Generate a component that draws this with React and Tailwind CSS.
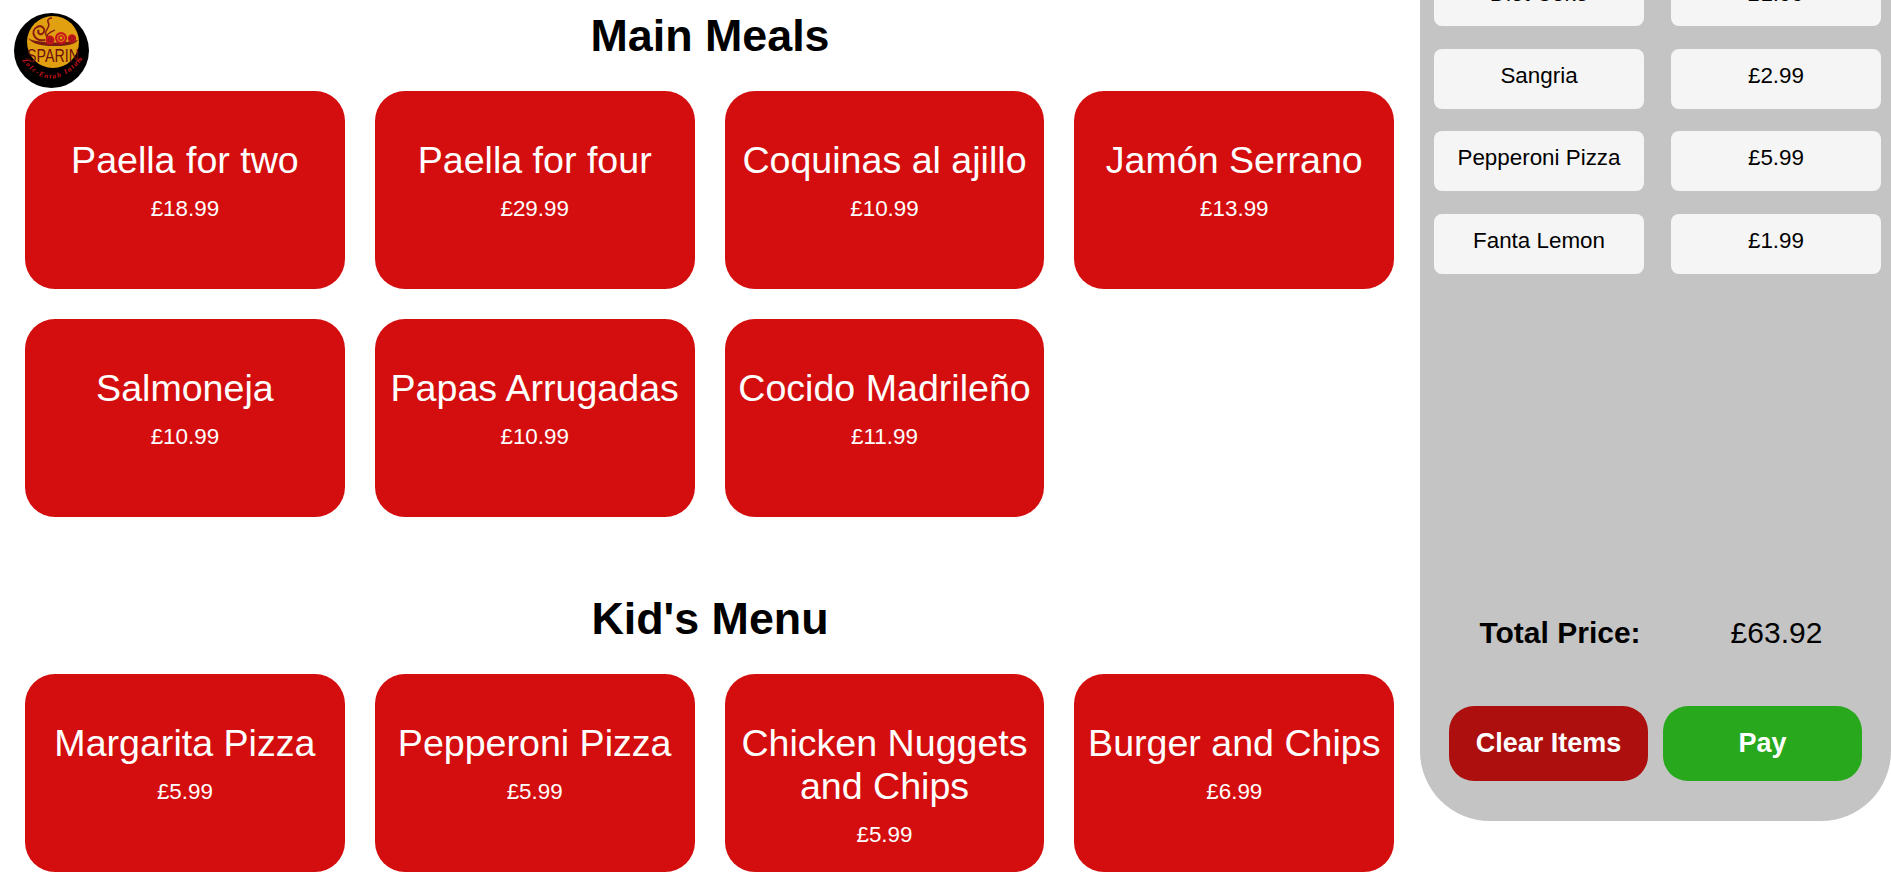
import React from 'react';

const mainMeals = [
    ['Paella for two', '£18.99'],
    ['Paella for four', '£29.99'],
    ['Coquinas al ajillo', '£10.99'],
    ['Jamón Serrano', '£13.99'],
    ['Salmoneja', '£10.99'],
    ['Papas Arrugadas', '£10.99'],
    ['Cocido Madrileño', '£11.99'],
];

const kidsMenu = [
    ['Margarita Pizza', '£5.99'],
    ['Pepperoni Pizza', '£5.99'],
    ['Chicken Nuggets and Chips', '£5.99'],
    ['Burger and Chips', '£6.99'],
];

const orderItems = [
    ['Sangria', '£2.99'],
    ['Pepperoni Pizza', '£5.99'],
    ['Fanta Lemon', '£1.99'],
];

const Logo = () => (
    <svg viewBox="0 0 75 75" className="absolute left-[14px] top-[13px] w-[75px] h-[75px]">
        <defs>
            <path id="logo-curve" d="M6 45 Q37 87 71 43" />
        </defs>
        <circle cx="37.5" cy="37.5" r="37.5" fill="#000" />
        <circle cx="39" cy="29" r="26" fill="#e0a010" />
        {/* swirl and steam */}
        <path d="M31 27 C20 29 16 18 23 14 C29 11 33 18 28 21 C25 22 23 19 25 17" fill="none" stroke="#8a1c12" strokeWidth="2" />
        <path d="M33 24 C28 17 38 15 34 9 C33 7 35 5 38 5" fill="none" stroke="#8a1c12" strokeWidth="1.6" />
        <path d="M33 27 C31 21 37 19 41 17" fill="none" stroke="#8a1c12" strokeWidth="1.2" />
        {/* bowl */}
        <path d="M14 25 C20 30 50 31 64 27 C60 33 48 33 38 33 C28 33 18 31 14 25 Z" fill="#7a1a10" />
        {/* snails */}
        <circle cx="36" cy="27" r="4.5" fill="#c8141c" />
        <circle cx="36" cy="27" r="2" fill="none" stroke="#7a1a10" strokeWidth="0.8" />
        <circle cx="47" cy="25" r="6" fill="#c8141c" />
        <circle cx="47" cy="25" r="3.5" fill="none" stroke="#e0a010" strokeWidth="0.9" />
        <circle cx="47" cy="25" r="1.4" fill="#e0a010" />
        <circle cx="58" cy="25.5" r="4.2" fill="#c8141c" />
        <circle cx="58" cy="25.5" r="2" fill="none" stroke="#7a1a10" strokeWidth="0.8" />
        <text x="39" y="49" textAnchor="middle" fontFamily="'Liberation Sans', sans-serif" fontSize="18" textLength="52" lengthAdjust="spacingAndGlyphs" fill="#6e0f0f">SPARIN</text>
        <text fontFamily="'Liberation Serif', serif" fontSize="7" fontWeight="700" fontStyle="italic" fill="#d4141c">
            <textPath href="#logo-curve" startOffset="3" textLength="74">Zolc-Entah Intam</textPath>
        </text>
    </svg>
);

const MenuCard = ({ name, price }) => (
    <button className="w-[319.8px] h-[198px] shrink-0 rounded-[30px] bg-[#d40e0e] text-white flex flex-col items-center justify-start px-[10px] pt-[48px]">
        <span className="text-[37.6px] leading-[43px]">{name}</span>
        <span className="text-[22.4px] leading-[26px] mt-[14px]">{price}</span>
    </button>
);

const MenuSection = ({ title, items, className }) => (
    <section className={className}>
        <h2 className="text-center text-[44.8px] leading-[50px] font-bold text-black">{title}</h2>
        <div className="flex flex-wrap gap-[30px] pl-[25px] mt-[31px]">
            {items.map(([name, price]) => (
                <MenuCard key={name} name={name} price={price} />
            ))}
        </div>
    </section>
);

const OrderCell = ({ children, className = 'pt-[14px]' }) => (
    <div className={`w-[210px] h-[60px] rounded-[8px] bg-[#f5f5f5] text-[22.4px] leading-[26px] text-black text-center ${className}`}>
        {children}
    </div>
);

export default function App() {
    return (
        <div className="relative flex w-[1891px] h-[885px] overflow-hidden bg-white font-['Liberation_Sans',Arial,sans-serif]">
            <Logo />
            <main className="w-[1420px] shrink-0 pt-[10px]">
                <MenuSection title="Main Meals" items={mainMeals} />
                <MenuSection title="Kid's Menu" items={kidsMenu} className="mt-[76px]" />
            </main>

            <aside className="w-[471px] h-[821px] shrink-0 rounded-b-[70px] bg-[#c4c4c4] flex flex-col overflow-hidden">
                <div className="flex flex-col gap-[22.5px] pl-[14px] -mt-[34px]">
                    {/* first row is scrolled mostly out of view */}
                    <div className="flex gap-[27px]">
                        <OrderCell className="pt-[15px]">Diet Coke</OrderCell>
                        <OrderCell className="pt-[15px]">£1.99</OrderCell>
                    </div>
                    {orderItems.map(([name, price]) => (
                        <div key={name} className="flex gap-[27px]">
                            <OrderCell>{name}</OrderCell>
                            <OrderCell>{price}</OrderCell>
                        </div>
                    ))}
                </div>
                <div className="flex text-[30px] leading-[34px] text-black mt-[342px]">
                    <span className="w-[280px] text-center font-bold">Total Price:</span>
                    <span className="w-[153px] text-center">£63.92</span>
                </div>
                <div className="flex gap-[15px] pl-[29px] mt-[56px]">
                    <button className="w-[199px] h-[75px] rounded-[25px] bg-[#ad0e0e] text-white font-bold text-[27px]">Clear Items</button>
                    <button className="w-[199px] h-[75px] rounded-[25px] bg-[#28a81c] text-white font-bold text-[27px]">Pay</button>
                </div>
            </aside>
        </div>
    );
}
